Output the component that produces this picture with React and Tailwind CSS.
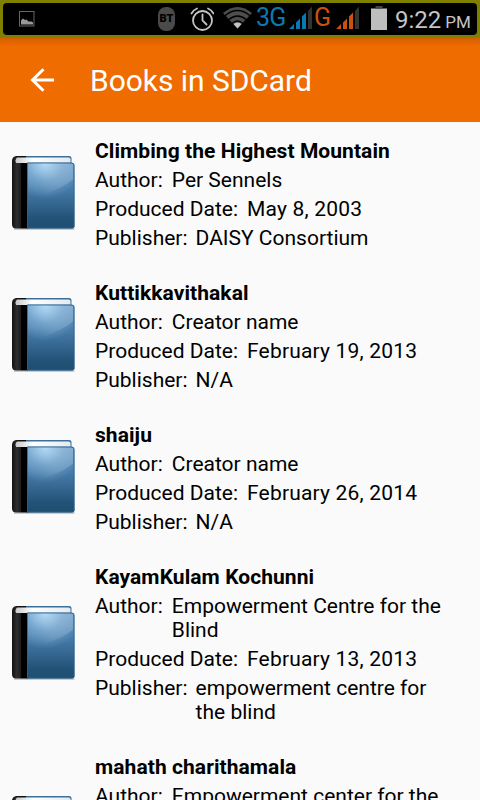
const books = [
  {
    title: "Climbing the Highest Mountain",
    author: "Per Sennels",
    date: "May 8, 2003",
    publisher: "DAISY Consortium",
  },
  {
    title: "Kuttikkavithakal",
    author: "Creator name",
    date: "February 19, 2013",
    publisher: "N/A",
  },
  {
    title: "shaiju",
    author: "Creator name",
    date: "February 26, 2014",
    publisher: "N/A",
  },
  {
    title: "KayamKulam Kochunni",
    author: "Empowerment Centre for the Blind",
    date: "February 13, 2013",
    publisher: "empowerment centre for the blind",
  },
  {
    title: "mahath charithamala",
    author: "Empowerment center for the Blind",
    date: "February 13, 2013",
    publisher: "empowerment centre for the blind",
  },
];

function BookIcon() {
  return (
    <svg width="66" height="76" viewBox="0 0 66 76" className="shrink-0">
      <defs>
        <linearGradient id="cover" x1="0" y1="0" x2="0" y2="1">
          <stop offset="0" stopColor="#5f93bf" />
          <stop offset="0.35" stopColor="#4a80ae" />
          <stop offset="0.85" stopColor="#235277" />
          <stop offset="1" stopColor="#1f4e73" />
        </linearGradient>
        <radialGradient id="glow" gradientUnits="userSpaceOnUse" cx="34" cy="8" r="36">
          <stop offset="0" stopColor="#b8defa" stopOpacity="0.95" />
          <stop offset="0.5" stopColor="#b8defa" stopOpacity="0.35" />
          <stop offset="1" stopColor="#b8defa" stopOpacity="0" />
        </radialGradient>
        <linearGradient id="shine" x1="0" y1="0" x2="1" y2="0">
          <stop offset="0.3" stopColor="#fff" stopOpacity="0" />
          <stop offset="1" stopColor="#fff" stopOpacity="0.18" />
        </linearGradient>
        <linearGradient id="spine" x1="0" y1="0" x2="1" y2="0">
          <stop offset="0" stopColor="#111" />
          <stop offset="0.3" stopColor="#2e2e2e" />
          <stop offset="0.55" stopColor="#1c1c1c" />
          <stop offset="0.6" stopColor="#000" />
          <stop offset="1" stopColor="#000" />
        </linearGradient>
        <linearGradient id="pages" x1="0" y1="0" x2="1" y2="0">
          <stop offset="0" stopColor="#c8c8c8" />
          <stop offset="0.3" stopColor="#fff" />
          <stop offset="1" stopColor="#e6e9ec" />
        </linearGradient>
      </defs>
      <path d="M3 74h60.5" stroke="#000" strokeOpacity="0.25" strokeWidth="1.6" />
      <path d="M5 1h53q2.500 0 2.500 2v6H5z" fill="#3c6f9b" />
      <path d="M5 1h10v3H3z" fill="#111" />
      <path d="M5.500 1Q1 1.500 1 6v63q0 4.500 4 4.500h12V8H5.500Q4 5.500 5.500 3z" fill="url(#spine)" />
      <path d="M6 2.500h51.500q2 0 2 1.500v4H5q-1-4 1-5.500z" fill="url(#pages)" />
      <path d="M16 7.500h44.500Q63.500 7.500 63.500 10v61.500q0 2-2.500 2H16z" fill="url(#cover)" />
      <path d="M16 8h46v50H16z" fill="url(#glow)" />
      <path d="M62 24.500Q53 32 36 38L16 44V9h46z" fill="url(#shine)" />
      <path d="M16.500 73V8h43.500q3 0 3 2.500V71q0 2-2 2z" fill="none" stroke="#2c618e" strokeOpacity="0.8" />
    </svg>
  );
}

function Signal() {
  return (
    <svg width="24" height="24" viewBox="0 0 24 24" className="mb-0.5 shrink-0" fill="currentColor">
      <path d="M0 23l5-5v5zM7 16.500l4-4V23H7zM13 10.500l4-4V23h-4z" />
      <path d="M19 5l4-4.500V23h-4z" fill="#333" />
    </svg>
  );
}

function StatusBar() {
  return (
    <div className="h-[38px] bg-[#808000] p-[3px]">
      <div className="flex h-8 items-center rounded-[4px] bg-black text-[#c4c4c4]">
        <svg width="16" height="16" viewBox="0 0 16 16" className="ml-4">
          <rect x="0.500" y="0.500" width="14.500" height="14.500" fill="none" stroke="#666" />
          <path d="M2 13.500v-4l2-2 2 1.500 1.500-.5 2 2h3l1.500 1v2z" fill="#999" />
        </svg>
        <span className="ml-[123px] flex h-6 w-[17px] items-center justify-center rounded-[8px] bg-[#4a4a4a] text-[11px] font-black text-black">
          BT
        </span>
        <svg width="24" height="26" viewBox="0 0 24 26" className="ml-[15px]" fill="none" stroke="currentColor" strokeWidth="1.8" strokeLinecap="round">
          <circle cx="12.500" cy="14.500" r="9.500" />
          <path d="M12.500 8.500v6l4 4M1.500 7.500q2-3.500 5.500-5M23.500 7.500q-2-3.500-5.500-5" />
        </svg>
        <svg width="29" height="24" viewBox="0 0 29 24" className="ml-[9px]">
          <path d="M0 6q14.500-12 29 0L14.500 21.500z" fill="#4d4d4d" />
          <g fill="none" stroke="#000" strokeWidth="1.4">
            <path d="M2 8.700q12.500-10.500 25 0M5.500 12.700q9-7.500 18 0M9 16.500q5.500-5 11 0" />
          </g>
          <path d="M10.500 17q4-3 8 0l-4 4.500z" fill="currentColor" />
        </svg>
        <div className="ml-1 flex items-center gap-[2px] text-[#0b79b1]">
          <span className="w-[31px] pb-[2px] text-[25px] leading-[30px] tracking-[-0.7px]">3G</span>
          <Signal />
        </div>
        <div className="ml-px flex items-center gap-[5px] text-[#c9530c]">
          <span className="w-[17px] pb-[2px] text-[25px] leading-[30px]">G</span>
          <Signal />
        </div>
        <svg width="16" height="24" viewBox="0 0 16 24" className="mb-0.5 ml-[11px]">
          <path d="M0 2.500h16V24H0z" fill="#bebebe" />
          <path d="M4.500 0h7v2.500h-7z" fill="#444" />
        </svg>
        <div className="ml-2 flex items-baseline gap-1">
          <span className="pt-1 text-[24px] leading-[28px]">9:22</span>
          <span className="text-[17px]">PM</span>
        </div>
      </div>
    </div>
  );
}

function Field({ label, children }) {
  return (
    <div className="mt-[5px] flex">
      <span className="shrink-0">{label}:</span>
      {children}
    </div>
  );
}

function BookRow({ book }) {
  return (
    <li className="flex items-center pl-[11px] pr-7">
      <BookIcon />
      <div className="ml-[18px] flex-1 pt-[17px] pb-[14px]">
        <h2 className="font-bold tracking-[0.07px]">{book.title}</h2>
        <Field label="Author">
          <span className="pl-[9px]">{book.author}</span>
        </Field>
        <Field label="Produced Date">
          <span className="pl-[9px] tracking-[0.18px]">{book.date}</span>
        </Field>
        <Field label="Publisher">
          <span className="pl-2">{book.publisher}</span>
        </Field>
      </div>
    </li>
  );
}

export default function App() {
  return (
    <div className="h-[800px] w-[480px] overflow-hidden bg-[#fafafa] font-['Roboto',sans-serif]">
      <StatusBar />
      <header className="flex h-[84px] items-center bg-[#ef6c00] bg-linear-to-b from-[#d45f00] to-[#ef6c00] to-10% pl-[30px] text-white">
        <svg width="25" height="24" viewBox="0 0 25 24" fill="none" stroke="#fff" strokeWidth="3">
          <path d="M24 12H3M13.500 1.200L2.500 12l11 10.800" />
        </svg>
        <h1 className="ml-[35px] text-[30px] tracking-[-0.05px]">Books in SDCard</h1>
      </header>
      <ul className="text-[21px] leading-6 text-black">
        {books.map((book) => (
          <BookRow key={book.title} book={book} />
        ))}
      </ul>
    </div>
  );
}
